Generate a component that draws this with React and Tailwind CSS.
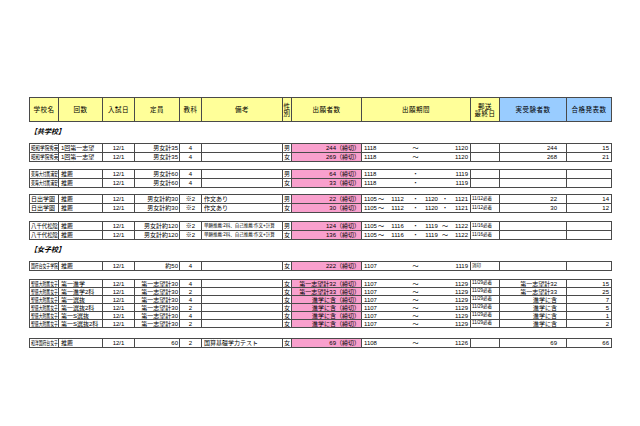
const COLS =
  "grid grid-cols-[29px_44px_32px_45px_22px_81px_9px_70px_109px_29px_67px_45px]";
const LINE = "border-[#4a4a4a]";

const P = (a, b, c, d, e, f, g) => [a, b, c, d, e, f, g];

const groups = [
  {
    gap: 0,
    rows: [
      { school: "昭和学院秀英", kai: "1回第一志望", date: "12/1", cap: "男女計35", subj: "4", note: "", sex: "男", apps: "244（締切）", period: P("1118", "", "", "～", "", "", "1120"), mail: "", exam: "244", pass: "15" },
      { school: "昭和学院秀英", kai: "1回第一志望", date: "12/1", cap: "男女計35", subj: "4", note: "", sex: "女", apps: "269（締切）", period: P("1118", "", "", "～", "", "", "1120"), mail: "", exam: "268", pass: "21" },
    ],
  },
  {
    gap: 7,
    rows: [
      { school: "東海大付属浦安", kai: "推薦", date: "12/1", cap: "男女計60", subj: "4", note: "", sex: "男", apps: "64（締切）", period: P("1118", "", "", "・", "", "", "1119"), mail: "", exam: "", pass: "" },
      { school: "東海大付属浦安", kai: "推薦", date: "12/1", cap: "男女計60", subj: "4", note: "", sex: "女", apps: "33（締切）", period: P("1118", "", "", "・", "", "", "1119"), mail: "", exam: "", pass: "" },
    ],
  },
  {
    gap: 6,
    rows: [
      { school: "日出学園", kai: "推薦", date: "12/1", cap: "男女計約30", subj: "※2", note: "作文あり", sex: "男", apps: "22（締切）", period: P("1105", "～", "1112", "・", "1120", "・", "1121"), mail: "11/12必着", exam: "22", pass: "14" },
      { school: "日出学園", kai: "推薦", date: "12/1", cap: "男女計約30", subj: "※2", note: "作文あり", sex: "女", apps: "30（締切）", period: P("1105", "～", "1112", "・", "1120", "・", "1121"), mail: "11/12必着", exam: "30", pass: "12" },
    ],
  },
  {
    gap: 8,
    rows: [
      { school: "八千代松陰", kai: "推薦", date: "12/1", cap: "男女計約120", subj: "※2", note: "単願推薦:2科、自己推薦:作文+計算", small: true, sex: "男", apps: "124（締切）", period: P("1105", "～", "1116", "・", "1119", "～", "1122"), mail: "11/16必着", exam: "", pass: "" },
      { school: "八千代松陰", kai: "推薦", date: "12/1", cap: "男女計約120", subj: "※2", note: "単願推薦:2科、自己推薦:作文+計算", small: true, sex: "女", apps: "136（締切）", period: P("1105", "～", "1116", "・", "1119", "～", "1122"), mail: "11/16必着", exam: "", pass: "" },
    ],
  },
];

const girls = [
  {
    gap: 0,
    rows: [
      { school: "国府台女子学院", kai: "推薦", date: "12/1", cap: "約50", subj: "4", note: "", sex: "女", apps: "222（締切）", period: P("1107", "", "", "～", "", "", "1119"), mail: "消印", exam: "", pass: "" },
    ],
  },
  {
    gap: 8,
    tight: true,
    rows: [
      ["第一進学", "4", "第一志望計32（締切）", "第一志望計32", "15"],
      ["第一進学2科", "2", "第一志望計33（締切）", "第一志望計33", "25"],
      ["第一選抜", "4", "進学に含（締切）", "進学に含", "7"],
      ["第一選抜2科", "2", "進学に含（締切）", "進学に含", "5"],
      ["第一S選抜", "4", "進学に含（締切）", "進学に含", "1"],
      ["第一S選抜2科", "2", "進学に含（締切）", "進学に含", "2"],
    ].map(([kai, subj, apps, exam, pass]) => ({
      school: "聖徳大附属女子", kai, date: "12/1", cap: "第一志望計30", subj, note: "", sex: "女", apps,
      period: P("1107", "", "", "～", "", "", "1129"), mail: "11/29必着", exam, pass,
    })),
  },
  {
    gap: 10,
    rows: [
      { school: "和洋国府台女子", kai: "推薦", date: "12/1", cap: "60", subj: "2", note: "国算基礎学力テスト", sex: "女", apps: "69（締切）", period: P("1108", "", "", "～", "", "", "1126"), mail: "", exam: "69", pass: "66" },
    ],
  },
];

function Cell({ className = "", children }) {
  return (
    <div className={`border-r border-b ${LINE} flex items-center overflow-hidden whitespace-nowrap leading-none ${className}`}>
      {children}
    </div>
  );
}

// long school names are squeezed sideways so they fit the narrow first column
function fitName(name) {
  if (name.length >= 7) return "scale-x-[0.64]";
  if (name.length === 6) return "scale-x-[0.76]";
  if (name.length === 5) return "scale-x-[0.9]";
  return "";
}

function Row({ r, tight }) {
  const h = tight ? "h-[8px]" : "h-[9px]";
  return (
    <div className={`${COLS} ${h}`}>
      <Cell className="pl-[1px]">
        <span className={`inline-block origin-left ${fitName(r.school)}`}>{r.school}</span>
      </Cell>
      <Cell className="pl-[2px]">{r.kai}</Cell>
      <Cell className="justify-center">{r.date}</Cell>
      <Cell className="justify-end pr-[1px]">{r.cap}</Cell>
      <Cell className="justify-center">{r.subj}</Cell>
      <Cell className={`pl-[2px] ${r.small ? "text-[4.5px]" : ""}`}>{r.note}</Cell>
      <Cell className="justify-center">{r.sex}</Cell>
      <Cell className="justify-end pr-[1px] bg-[#f9a0cd]">{r.apps}</Cell>
      <Cell className="!block">
        <div className="grid h-full grid-cols-[15px_8px_25px_11px_21px_6px_22px] items-center">
          {r.period.map((t, i) => (
            <span
              key={i}
              className={i === 0 ? "pl-[2px]" : i === 6 ? "text-right pr-[2px]" : "text-center"}
            >
              {t}
            </span>
          ))}
        </div>
      </Cell>
      <Cell className="pl-[1px] text-[4.5px]">{r.mail}</Cell>
      <Cell className="justify-end pr-[9px]">{r.exam}</Cell>
      <Cell className="justify-end pr-[2px]">{r.pass}</Cell>
    </div>
  );
}

function Group({ g }) {
  return (
    <div style={{ marginTop: g.gap }} className={`border-t border-l ${LINE} w-[583px]`}>
      {g.rows.map((r, i) => (
        <Row key={i} r={r} tight={g.tight} />
      ))}
    </div>
  );
}

function Header() {
  const heads = [
    ["学校名", "y"],
    ["回数", "y"],
    ["入試日", "y"],
    ["定員", "y"],
    ["教科", "y"],
    ["備考", "y"],
    ["性\n別", "y"],
    ["出願者数", "y"],
    ["出願期間", "y"],
    ["郵送\n最終日", "y"],
    ["実受験者数", "b"],
    ["合格発表数", "b"],
  ];
  return (
    <div className={`${COLS} h-[25px] border-t border-l ${LINE} w-[583px]`}>
      {heads.map(([t, c], i) => (
        <div
          key={i}
          className={`border-r border-b ${LINE} flex items-center justify-center text-center whitespace-pre-line leading-[7px] text-[6.5px] tracking-[0.5px] ${
            c === "y" ? "bg-[#ffff99]" : "bg-[#99ccff]"
          }`}
        >
          {t}
        </div>
      ))}
    </div>
  );
}

function Label({ children }) {
  return (
    <div className="h-[21px] flex items-center pl-[1px] text-[7px] font-bold italic">
      {children}
    </div>
  );
}

export default function App() {
  return (
    <div className="w-[640px] h-[426px] bg-white text-black pt-[97px] pl-[29px] font-['Liberation_Sans','Noto_Sans_CJK_JP',sans-serif] text-[6px] overflow-hidden">
      <Header />
      <Label>【共学校】</Label>
      {groups.map((g, i) => (
        <Group key={i} g={g} />
      ))}
      <Label>【女子校】</Label>
      {girls.map((g, i) => (
        <Group key={i} g={g} />
      ))}
    </div>
  );
}
